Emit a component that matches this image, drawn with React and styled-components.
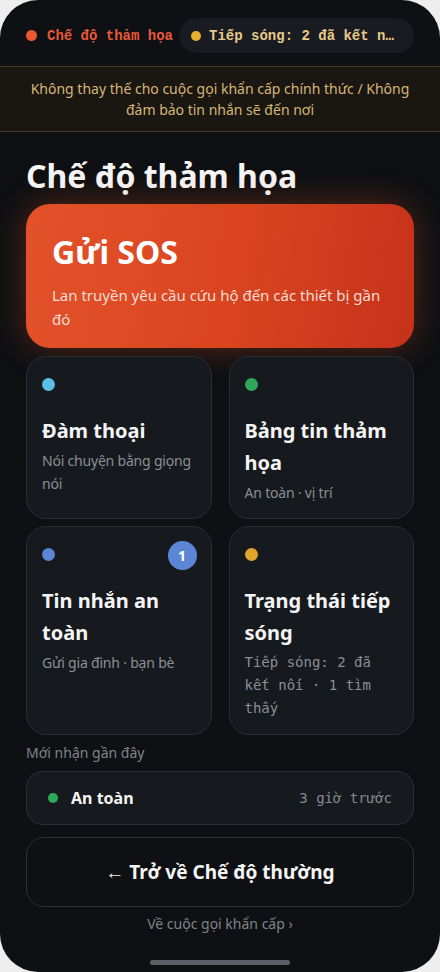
import React from "react";
import styled, { createGlobalStyle } from "styled-components";

const GlobalStyle = createGlobalStyle`
  html, body {
    margin: 0;
    padding: 0;
    background: #eeeeee;
  }
  * {
    box-sizing: border-box;
  }
`;

const sans = `"Noto Sans", "Open Sans", sans-serif`;
const mono = `"DejaVu Sans Mono", "Liberation Mono", monospace`;
const boldMono = `"Liberation Mono", "DejaVu Sans Mono", monospace`;

const tiles = [
  { id: "talk", dot: "#5bc0e8", title: "Đàm thoại", sub: "Nói chuyện bằng giọng nói" },
  { id: "board", dot: "#2ea85a", title: "Bảng tin thảm họa", sub: "An toàn · vị trí" },
  { id: "safe", dot: "#5b86d6", title: "Tin nhắn an toàn", sub: "Gửi gia đình · bạn bè", badge: 1 },
  {
    id: "relay",
    dot: "#e0a52a",
    title: "Trạng thái tiếp sóng",
    sub: "Tiếp sóng: 2 đã kết nối · 1 tìm thấy",
    mono: true
  }
];

export default function App() {
  return (
    <>
      <GlobalStyle />
      <Phone>
        <StatusBar>
          <ModeTag>
            <Dot color="#ea5a32" size={11} />
            Chế độ thảm họa
          </ModeTag>
          <RelayPill>
            <Dot color="#e6b22e" size={10} />
            <RelayText>Tiếp sóng: 2 đã kết nối · 1 tìm thấy</RelayText>
          </RelayPill>
        </StatusBar>

        <Warning>
          Không thay thế cho cuộc gọi khẩn cấp chính thức / Không đảm bảo tin nhắn sẽ đến nơi
        </Warning>

        <Content>
          <Title>Chế độ thảm họa</Title>

          <SosCard>
            <SosTitle>Gửi SOS</SosTitle>
            <SosSub>Lan truyền yêu cầu cứu hộ đến các thiết bị gần đó</SosSub>
          </SosCard>

          <Grid>
            {tiles.map(t => (
              <Tile key={t.id} tall={t.id === "safe" || t.id === "relay"}>
                <TileTop>
                  <Dot color={t.dot} size={13} />
                  {t.badge && <Badge>{t.badge}</Badge>}
                </TileTop>
                <TileTitle>{t.title}</TileTitle>
                <TileSub mono={t.mono}>{t.sub}</TileSub>
              </Tile>
            ))}
          </Grid>

          <SectionLabel>Mới nhận gần đây</SectionLabel>
          <RecentRow>
            <Dot color="#2ea85a" size={10} />
            <RecentName>An toàn</RecentName>
            <RecentTime>3 giờ trước</RecentTime>
          </RecentRow>

          <BackButton>← Trở về Chế độ thường</BackButton>
          <FooterLink>Về cuộc gọi khẩn cấp ›</FooterLink>
        </Content>

        <HomeBar />
      </Phone>
    </>
  );
}

const Phone = styled.div`
  width: 440px;
  height: 972px;
  background: #0e1013;
  border-radius: 38px;
  overflow: hidden;
  display: flex;
  flex-direction: column;
  font-family: ${sans};
  color: #fff;
  position: relative;
`;

const StatusBar = styled.div`
  display: flex;
  align-items: flex-start;
  gap: 6px;
  padding: 18px 26px 0 26px;
  height: 66px;
`;

const Dot = styled.span`
  flex: none;
  width: ${p => p.size}px;
  height: ${p => p.size}px;
  border-radius: 50%;
  background: ${p => p.color};
`;

const ModeTag = styled.div`
  display: flex;
  align-items: center;
  gap: 10px;
  height: 35px;
  font-family: ${boldMono};
  font-weight: bold;
  font-size: 14px;
  color: #e8593a;
  white-space: nowrap;
`;

const RelayPill = styled.div`
  flex: 1;
  min-width: 0;
  display: flex;
  align-items: center;
  gap: 8px;
  height: 35px;
  padding: 0 16px 0 12px;
  border-radius: 18px;
  background: #181b20;
`;

const RelayText = styled.span`
  min-width: 0;
  overflow: hidden;
  text-overflow: ellipsis;
  white-space: nowrap;
  font-family: ${boldMono};
  font-weight: bold;
  font-size: 14px;
  color: #e8c98a;
`;

const Warning = styled.div`
  padding: 11px 30px;
  background: #1a1611;
  border-top: 1px solid #4a3823;
  border-bottom: 1px solid #4a3823;
  color: #d6b676;
  font-size: 14px;
  line-height: 21px;
  text-align: center;
`;

const Content = styled.div`
  flex: 1;
  display: flex;
  flex-direction: column;
  padding: 22px 26px 0 26px;
`;

const Title = styled.h1`
  margin: 0 0 6px 0;
  font-size: 32px;
  line-height: 44px;
  font-weight: 700;
  color: #f6f6f6;
`;

const SosCard = styled.div`
  height: 144px;
  border-radius: 24px;
  padding: 26px 26px 0 26px;
  background: linear-gradient(100deg, #e3522b 0%, #d9441f 55%, #c5321a 100%);
  box-shadow: 0 0 34px rgba(225, 80, 35, 0.35);
`;

const SosTitle = styled.div`
  font-size: 32px;
  font-weight: 700;
  line-height: 44px;
  color: #fff;
`;

const SosSub = styled.div`
  margin-top: 9px;
  font-size: 15px;
  line-height: 24px;
  color: #f7ddd3;
`;

const Grid = styled.div`
  margin-top: 8px;
  display: grid;
  grid-template-columns: 1fr 1fr;
  column-gap: 17px;
  row-gap: 7px;
`;

const Tile = styled.div`
  height: ${p => (p.tall ? 209 : 163)}px;
  border-radius: 20px;
  background: #16191d;
  border: 1px solid #2a2e34;
  padding: 20px 14px 0 15px;
  display: flex;
  flex-direction: column;
`;

const TileTop = styled.div`
  height: 14px;
  display: flex;
  align-items: center;
  justify-content: space-between;
  margin-bottom: 24px;
`;

const Badge = styled.span`
  width: 29px;
  height: 29px;
  margin-top: 2px;
  border-radius: 50%;
  background: #5b86d6;
  color: #fff;
  font-size: 14px;
  font-weight: 700;
  display: flex;
  align-items: center;
  justify-content: center;
`;

const TileTitle = styled.div`
  font-size: 20px;
  font-weight: 700;
  line-height: 32px;
  color: #f4f4f4;
`;

const TileSub = styled.div`
  margin-top: 2px;
  font-family: ${p => (p.mono ? mono : sans)};
  font-size: 14px;
  letter-spacing: ${p => (p.mono ? 0 : -0.2)}px;
  line-height: 23px;
  color: #8a8f97;
`;

const SectionLabel = styled.div`
  margin-top: 8px;
  font-size: 14px;
  line-height: 20px;
  color: #7f848b;
`;

const RecentRow = styled.div`
  margin-top: 8px;
  height: 54px;
  border-radius: 16px;
  background: #16191d;
  border: 1px solid #2a2e34;
  display: flex;
  align-items: center;
  padding: 0 21px;
  gap: 13px;
`;

const RecentName = styled.span`
  flex: 1;
  font-size: 16px;
  font-weight: 700;
  color: #f4f4f4;
`;

const RecentTime = styled.span`
  font-family: ${mono};
  font-size: 14px;
  color: #868a91;
`;

const BackButton = styled.button`
  margin-top: 12px;
  height: 70px;
  border-radius: 18px;
  background: transparent;
  border: 1px solid #2e3237;
  color: #f4f4f4;
  font-family: ${sans};
  font-size: 19px;
  font-weight: 700;
  cursor: pointer;
`;

const FooterLink = styled.div`
  margin-top: 6px;
  text-align: center;
  font-size: 14px;
  line-height: 22px;
  color: #80848b;
`;

const HomeBar = styled.div`
  position: absolute;
  left: 150px;
  bottom: 7px;
  width: 140px;
  height: 5px;
  border-radius: 3px;
  background: #5c5f65;
`;
